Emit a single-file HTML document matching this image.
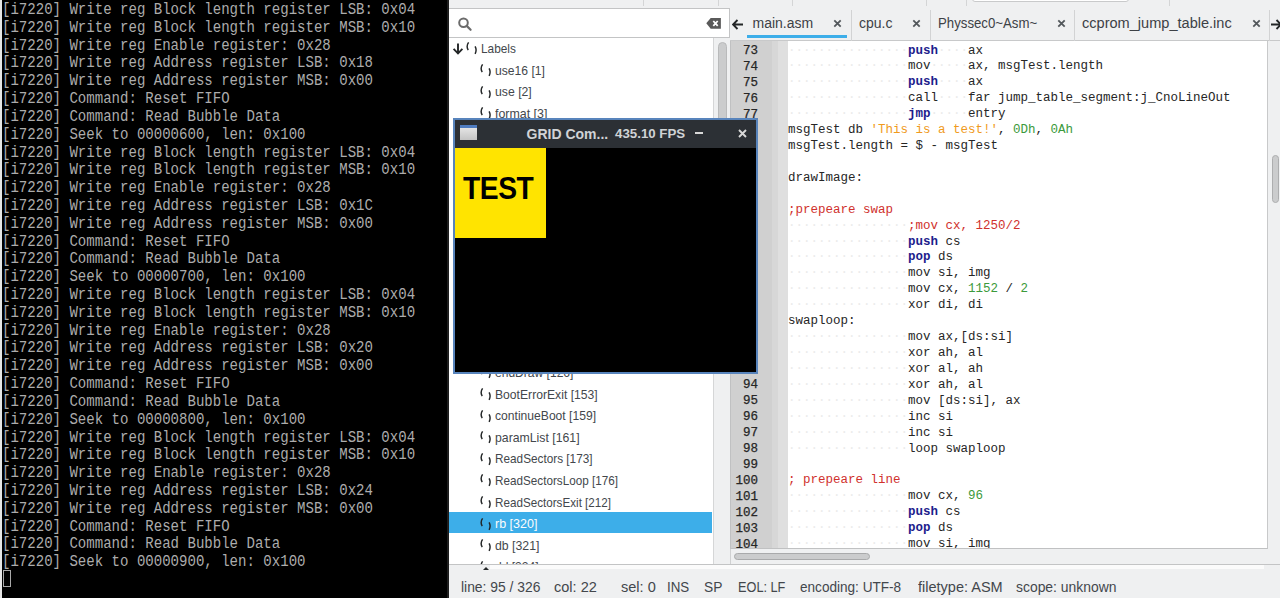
<!DOCTYPE html><html><head><meta charset="utf-8"><style>html,body{margin:0;padding:0}
body{width:1280px;height:598px;overflow:hidden;position:relative;background:#eff0f1;font-family:"Liberation Sans",sans-serif}
div,span,pre,svg{position:absolute;box-sizing:border-box}
pre{margin:0}
pre span{position:static}
#term{left:0;top:0;width:449px;height:598px;background:#000}
#termstrip{left:0;top:0;width:2px;height:598px;background:#e6e6e6}
#termedge{left:447px;top:0;width:2px;height:598px;background:#1e1e1e}
#termtext{left:1.5px;top:2px;font-family:"Liberation Mono",monospace;font-size:16px;line-height:17.82px;color:#acacac;transform:scaleX(0.878);transform-origin:0 0}
#cursor{left:2.5px;top:569.5px;width:8.5px;height:17.5px;border:1px solid #a8a8a8}
#toolbar{left:449px;top:0;width:831px;height:8px;background:#eff0f1}
.tsep{top:0;width:1px;height:6px;background:#d4d5d6}
#tbox{left:523px;top:-4px;width:157px;height:6px;background:#fff;border:1px solid #c9cacb;border-radius:3px}
#search{left:449px;top:8px;width:281px;height:30px;background:#fff;border:1px solid #c3c4c5;border-left:none}
#list{left:449px;top:38px;width:264px;height:526px;background:#fff;overflow:hidden}
.row{left:0;width:263px;height:21.6px;color:#43474c;font-size:12.2px}
.row.sel{background:#3daee9;color:#fcfcfc;height:21px;top:475px}
.arr{left:3px;top:6px}
.ico{top:5.2px}
.lbl{top:4.8px;white-space:pre;transform:scaleX(0.97);transform-origin:0 0}
#ltrack{left:713px;top:38px;width:17px;height:526px;background:#eff0f1;border-left:1px solid #d5d6d7}
#lthumb{left:4px;top:4px;width:9px;height:300px;background:#cbcccd;border:1px solid #b9babb;border-radius:5px}
#tabbar{left:730px;top:8px;width:550px;height:33px;background:#eff0f1;border-bottom:1px solid #c8c9ca}
.tab{top:7px;font-size:14px;color:#3d4146;white-space:pre}
.tclose{top:10.8px}
.tabsep{top:2px;width:1px;height:31px;background:#d2d3d4}
#tabul{left:16.5px;top:27px;width:100px;height:3px;background:#3daee9}
#editor{left:730px;top:41px;width:538px;height:508px;background:#fff;border-left:1px solid #c0c1c2;border-bottom:1px solid #c0c1c2;border-right:1px solid #c8c9ca;overflow:hidden}
#gut1{left:0;top:0;width:41px;height:508px;background:#d0d0d0}
#gut2{left:41px;top:0;width:6px;height:508px;background:#d7d7d7}
#gut3{left:47px;top:0;width:10px;height:508px;background:#dfdfdf}
#lnum{left:0;top:3px;width:27px;text-align:right;font-family:"Liberation Mono",monospace;font-size:12.5px;line-height:15.92px;color:#262626;-webkit-text-stroke:0.25px #262626}
#code{left:57px;top:2.5px;font-family:"Liberation Mono",monospace;font-size:12.5px;line-height:15.92px;color:#262626}
.ws{color:#ebebeb}
.k{color:#1c1c8c;font-weight:bold}
.c{color:#d0312d}
.s{color:#f09a1c}
.n{color:#3c9a3c}
#vtrack{left:1268px;top:41px;width:12px;height:508px;background:#eff0f1}
#vthumb{left:4px;top:113.5px;width:7px;height:48.5px;background:#cbcccd;border:1px solid #adaeaf;border-radius:4px}
#htrack{left:730px;top:549px;width:550px;height:15px;background:#eff0f1;border-left:1px solid #d0d1d2}
#hthumb{left:3px;top:4px;width:136px;height:7px;background:#cbcccd;border:1px solid #a9aaab;border-radius:4px}
#status{left:449px;top:564px;width:831px;height:34px;background:#eff0f1;border-top:1px solid #c3c4c5}
#swhite{left:41px;top:0;width:774px;height:4px;background:#fbfbfb}
#stri{left:34px;top:2px;width:0;height:0;border-left:3px solid transparent;border-right:3px solid transparent;border-bottom:3px solid #232627}
.st{top:14.2px;font-size:13.9px;color:#43474c;white-space:pre;transform:scaleX(0.965);transform-origin:0 0}
#win{left:453px;top:118px;width:305px;height:256px;background:#000;border:2px solid #5884bc}
#wtitle{left:0;top:0;width:301px;height:28px;background:#2c3035}
#wicon{left:4.8px;top:4.8px;width:17px;height:15.5px;background:linear-gradient(#e4e4e4,#c4c4c4);border-top:3.5px solid #4f7cc0}
#wt1{left:71.5px;top:5.8px;font-weight:bold;font-size:14px;color:#d0d3d6;white-space:pre}
#wt2{left:160px;top:6.2px;font-weight:bold;font-size:13.3px;color:#d0d3d6;white-space:pre}
#wmin{left:240px;top:12px;width:8px;height:2px;background:#d8d8d8}
#wclose{left:282.5px;top:8.5px}
#wbody{left:0;top:28px;width:301px;height:224px;background:#000}
#yel{left:0;top:0;width:91px;height:90px;background:#ffe400}
#test{left:8px;top:22px;font-weight:bold;font-size:32px;color:#000;transform:scaleX(0.882);transform-origin:0 0;letter-spacing:-0.5px}
</style></head><body><div id="term"><div id="termstrip"></div><div id="termedge"></div><pre id="termtext">[i7220] Write reg Block length register LSB: 0x04
[i7220] Write reg Block length register MSB: 0x10
[i7220] Write reg Enable register: 0x28
[i7220] Write reg Address register LSB: 0x18
[i7220] Write reg Address register MSB: 0x00
[i7220] Command: Reset FIFO
[i7220] Command: Read Bubble Data
[i7220] Seek to 00000600, len: 0x100
[i7220] Write reg Block length register LSB: 0x04
[i7220] Write reg Block length register MSB: 0x10
[i7220] Write reg Enable register: 0x28
[i7220] Write reg Address register LSB: 0x1C
[i7220] Write reg Address register MSB: 0x00
[i7220] Command: Reset FIFO
[i7220] Command: Read Bubble Data
[i7220] Seek to 00000700, len: 0x100
[i7220] Write reg Block length register LSB: 0x04
[i7220] Write reg Block length register MSB: 0x10
[i7220] Write reg Enable register: 0x28
[i7220] Write reg Address register LSB: 0x20
[i7220] Write reg Address register MSB: 0x00
[i7220] Command: Reset FIFO
[i7220] Command: Read Bubble Data
[i7220] Seek to 00000800, len: 0x100
[i7220] Write reg Block length register LSB: 0x04
[i7220] Write reg Block length register MSB: 0x10
[i7220] Write reg Enable register: 0x28
[i7220] Write reg Address register LSB: 0x24
[i7220] Write reg Address register MSB: 0x00
[i7220] Command: Reset FIFO
[i7220] Command: Read Bubble Data
[i7220] Seek to 00000900, len: 0x100</pre><div id="cursor"></div></div><div id="toolbar"><div class="tsep" style="left:194px"></div><div class="tsep" style="left:269px"></div><div class="tsep" style="left:343px"></div><div class="tsep" style="left:477px"></div><div class="tsep" style="left:517px"></div><div class="tsep" style="left:720px"></div><div id="tbox"></div></div><div id="search"><svg width="20" height="20" style="position:absolute;left:8px;top:3px" viewBox="0 0 20 20"><circle cx="6.5" cy="10.7" r="4.3" fill="none" stroke="#6b6b6b" stroke-width="2"/><line x1="9.7" y1="13.9" x2="13.6" y2="17.8" stroke="#6b6b6b" stroke-width="2.2" stroke-linecap="round"/></svg><svg width="18" height="14" style="position:absolute;left:256px;top:9px" viewBox="0 0 18 14"><path d="M1.3 5.3 L5.7 0.1 L15.9 0.1 L15.9 10.7 L5.7 10.7 Z" fill="#5a5a5a"/><path d="M8.3 3 L12.7 7.8 M12.7 3 L8.3 7.8" stroke="#fff" stroke-width="1.8"/></svg></div><div id="list"><div class="row" style="top:-0.8px"><svg class="arr" width="12" height="12" viewBox="0 0 12 12"><path d="M6 0.5 V10.3 M1.6 5.9 L6 10.3 L10.4 5.9" fill="none" stroke="#232627" stroke-width="1.9"/></svg><svg class="ico" style="left:17.3px" width="14" height="14" viewBox="0 0 14 14"><path d="M2.6 0.4 Q-0.1 4.2 2.2 8.1" fill="none" stroke="#232627" stroke-width="1.45"/><path d="M9.1 4.3 Q11.1 7.9 9.1 11.8" fill="none" stroke="#232627" stroke-width="1.45"/></svg><span class="lbl" style="left:32px;transform:scaleX(0.970)">Labels</span></div><div class="row" style="top:20.8px"><svg class="ico" style="left:31.3px" width="14" height="14" viewBox="0 0 14 14"><path d="M2.6 0.4 Q-0.1 4.2 2.2 8.1" fill="none" stroke="#232627" stroke-width="1.45"/><path d="M9.1 4.3 Q11.1 7.9 9.1 11.8" fill="none" stroke="#232627" stroke-width="1.45"/></svg><span class="lbl" style="left:46px;transform:scaleX(0.995)">use16 [1]</span></div><div class="row" style="top:42.4px"><svg class="ico" style="left:31.3px" width="14" height="14" viewBox="0 0 14 14"><path d="M2.6 0.4 Q-0.1 4.2 2.2 8.1" fill="none" stroke="#232627" stroke-width="1.45"/><path d="M9.1 4.3 Q11.1 7.9 9.1 11.8" fill="none" stroke="#232627" stroke-width="1.45"/></svg><span class="lbl" style="left:46px;transform:scaleX(1.005)">use [2]</span></div><div class="row" style="top:64.0px"><svg class="ico" style="left:31.3px" width="14" height="14" viewBox="0 0 14 14"><path d="M2.6 0.4 Q-0.1 4.2 2.2 8.1" fill="none" stroke="#232627" stroke-width="1.45"/><path d="M9.1 4.3 Q11.1 7.9 9.1 11.8" fill="none" stroke="#232627" stroke-width="1.45"/></svg><span class="lbl" style="left:46px;transform:scaleX(1.018)">format [3]</span></div><div class="row" style="top:85.6px"><svg class="ico" style="left:31.3px" width="14" height="14" viewBox="0 0 14 14"><path d="M2.6 0.4 Q-0.1 4.2 2.2 8.1" fill="none" stroke="#232627" stroke-width="1.45"/><path d="M9.1 4.3 Q11.1 7.9 9.1 11.8" fill="none" stroke="#232627" stroke-width="1.45"/></svg><span class="lbl" style="left:46px;transform:scaleX(0.989)">a [4]</span></div><div class="row" style="top:107.2px"><svg class="ico" style="left:31.3px" width="14" height="14" viewBox="0 0 14 14"><path d="M2.6 0.4 Q-0.1 4.2 2.2 8.1" fill="none" stroke="#232627" stroke-width="1.45"/><path d="M9.1 4.3 Q11.1 7.9 9.1 11.8" fill="none" stroke="#232627" stroke-width="1.45"/></svg><span class="lbl" style="left:46px;transform:scaleX(0.989)">b [5]</span></div><div class="row" style="top:128.8px"><svg class="ico" style="left:31.3px" width="14" height="14" viewBox="0 0 14 14"><path d="M2.6 0.4 Q-0.1 4.2 2.2 8.1" fill="none" stroke="#232627" stroke-width="1.45"/><path d="M9.1 4.3 Q11.1 7.9 9.1 11.8" fill="none" stroke="#232627" stroke-width="1.45"/></svg><span class="lbl" style="left:46px;transform:scaleX(0.989)">c [6]</span></div><div class="row" style="top:150.4px"><svg class="ico" style="left:31.3px" width="14" height="14" viewBox="0 0 14 14"><path d="M2.6 0.4 Q-0.1 4.2 2.2 8.1" fill="none" stroke="#232627" stroke-width="1.45"/><path d="M9.1 4.3 Q11.1 7.9 9.1 11.8" fill="none" stroke="#232627" stroke-width="1.45"/></svg><span class="lbl" style="left:46px;transform:scaleX(0.989)">d [7]</span></div><div class="row" style="top:172.0px"><svg class="ico" style="left:31.3px" width="14" height="14" viewBox="0 0 14 14"><path d="M2.6 0.4 Q-0.1 4.2 2.2 8.1" fill="none" stroke="#232627" stroke-width="1.45"/><path d="M9.1 4.3 Q11.1 7.9 9.1 11.8" fill="none" stroke="#232627" stroke-width="1.45"/></svg><span class="lbl" style="left:46px;transform:scaleX(0.989)">e [8]</span></div><div class="row" style="top:193.6px"><svg class="ico" style="left:31.3px" width="14" height="14" viewBox="0 0 14 14"><path d="M2.6 0.4 Q-0.1 4.2 2.2 8.1" fill="none" stroke="#232627" stroke-width="1.45"/><path d="M9.1 4.3 Q11.1 7.9 9.1 11.8" fill="none" stroke="#232627" stroke-width="1.45"/></svg><span class="lbl" style="left:46px;transform:scaleX(0.989)">f [9]</span></div><div class="row" style="top:215.2px"><svg class="ico" style="left:31.3px" width="14" height="14" viewBox="0 0 14 14"><path d="M2.6 0.4 Q-0.1 4.2 2.2 8.1" fill="none" stroke="#232627" stroke-width="1.45"/><path d="M9.1 4.3 Q11.1 7.9 9.1 11.8" fill="none" stroke="#232627" stroke-width="1.45"/></svg><span class="lbl" style="left:46px;transform:scaleX(0.989)">g [10]</span></div><div class="row" style="top:236.8px"><svg class="ico" style="left:31.3px" width="14" height="14" viewBox="0 0 14 14"><path d="M2.6 0.4 Q-0.1 4.2 2.2 8.1" fill="none" stroke="#232627" stroke-width="1.45"/><path d="M9.1 4.3 Q11.1 7.9 9.1 11.8" fill="none" stroke="#232627" stroke-width="1.45"/></svg><span class="lbl" style="left:46px;transform:scaleX(0.989)">h [11]</span></div><div class="row" style="top:258.4px"><svg class="ico" style="left:31.3px" width="14" height="14" viewBox="0 0 14 14"><path d="M2.6 0.4 Q-0.1 4.2 2.2 8.1" fill="none" stroke="#232627" stroke-width="1.45"/><path d="M9.1 4.3 Q11.1 7.9 9.1 11.8" fill="none" stroke="#232627" stroke-width="1.45"/></svg><span class="lbl" style="left:46px;transform:scaleX(0.989)">i [12]</span></div><div class="row" style="top:280.0px"><svg class="ico" style="left:31.3px" width="14" height="14" viewBox="0 0 14 14"><path d="M2.6 0.4 Q-0.1 4.2 2.2 8.1" fill="none" stroke="#232627" stroke-width="1.45"/><path d="M9.1 4.3 Q11.1 7.9 9.1 11.8" fill="none" stroke="#232627" stroke-width="1.45"/></svg><span class="lbl" style="left:46px;transform:scaleX(0.989)">j [13]</span></div><div class="row" style="top:301.6px"><svg class="ico" style="left:31.3px" width="14" height="14" viewBox="0 0 14 14"><path d="M2.6 0.4 Q-0.1 4.2 2.2 8.1" fill="none" stroke="#232627" stroke-width="1.45"/><path d="M9.1 4.3 Q11.1 7.9 9.1 11.8" fill="none" stroke="#232627" stroke-width="1.45"/></svg><span class="lbl" style="left:46px;transform:scaleX(0.989)">k [14]</span></div><div class="row" style="top:323.2px"><svg class="ico" style="left:31.3px" width="14" height="14" viewBox="0 0 14 14"><path d="M2.6 0.4 Q-0.1 4.2 2.2 8.1" fill="none" stroke="#232627" stroke-width="1.45"/><path d="M9.1 4.3 Q11.1 7.9 9.1 11.8" fill="none" stroke="#232627" stroke-width="1.45"/></svg><span class="lbl" style="left:46px;transform:scaleX(0.989)">endDraw [126]</span></div><div class="row" style="top:344.8px"><svg class="ico" style="left:31.3px" width="14" height="14" viewBox="0 0 14 14"><path d="M2.6 0.4 Q-0.1 4.2 2.2 8.1" fill="none" stroke="#232627" stroke-width="1.45"/><path d="M9.1 4.3 Q11.1 7.9 9.1 11.8" fill="none" stroke="#232627" stroke-width="1.45"/></svg><span class="lbl" style="left:46px;transform:scaleX(0.997)">BootErrorExit [153]</span></div><div class="row" style="top:366.4px"><svg class="ico" style="left:31.3px" width="14" height="14" viewBox="0 0 14 14"><path d="M2.6 0.4 Q-0.1 4.2 2.2 8.1" fill="none" stroke="#232627" stroke-width="1.45"/><path d="M9.1 4.3 Q11.1 7.9 9.1 11.8" fill="none" stroke="#232627" stroke-width="1.45"/></svg><span class="lbl" style="left:46px;transform:scaleX(0.994)">continueBoot [159]</span></div><div class="row" style="top:388.0px"><svg class="ico" style="left:31.3px" width="14" height="14" viewBox="0 0 14 14"><path d="M2.6 0.4 Q-0.1 4.2 2.2 8.1" fill="none" stroke="#232627" stroke-width="1.45"/><path d="M9.1 4.3 Q11.1 7.9 9.1 11.8" fill="none" stroke="#232627" stroke-width="1.45"/></svg><span class="lbl" style="left:46px;transform:scaleX(1.007)">paramList [161]</span></div><div class="row" style="top:409.6px"><svg class="ico" style="left:31.3px" width="14" height="14" viewBox="0 0 14 14"><path d="M2.6 0.4 Q-0.1 4.2 2.2 8.1" fill="none" stroke="#232627" stroke-width="1.45"/><path d="M9.1 4.3 Q11.1 7.9 9.1 11.8" fill="none" stroke="#232627" stroke-width="1.45"/></svg><span class="lbl" style="left:46px;transform:scaleX(0.966)">ReadSectors [173]</span></div><div class="row" style="top:431.2px"><svg class="ico" style="left:31.3px" width="14" height="14" viewBox="0 0 14 14"><path d="M2.6 0.4 Q-0.1 4.2 2.2 8.1" fill="none" stroke="#232627" stroke-width="1.45"/><path d="M9.1 4.3 Q11.1 7.9 9.1 11.8" fill="none" stroke="#232627" stroke-width="1.45"/></svg><span class="lbl" style="left:46px;transform:scaleX(0.960)">ReadSectorsLoop [176]</span></div><div class="row" style="top:452.8px"><svg class="ico" style="left:31.3px" width="14" height="14" viewBox="0 0 14 14"><path d="M2.6 0.4 Q-0.1 4.2 2.2 8.1" fill="none" stroke="#232627" stroke-width="1.45"/><path d="M9.1 4.3 Q11.1 7.9 9.1 11.8" fill="none" stroke="#232627" stroke-width="1.45"/></svg><span class="lbl" style="left:46px;transform:scaleX(0.957)">ReadSectorsExit [212]</span></div><div class="row sel" style="top:474.4px"><svg class="ico" style="left:31.3px" width="14" height="14" viewBox="0 0 14 14"><path d="M2.6 0.4 Q-0.1 4.2 2.2 8.1" fill="none" stroke="#232627" stroke-width="1.45"/><path d="M9.1 4.3 Q11.1 7.9 9.1 11.8" fill="none" stroke="#232627" stroke-width="1.45"/></svg><span class="lbl" style="left:46px;transform:scaleX(1.028)">rb [320]</span></div><div class="row" style="top:496.0px"><svg class="ico" style="left:31.3px" width="14" height="14" viewBox="0 0 14 14"><path d="M2.6 0.4 Q-0.1 4.2 2.2 8.1" fill="none" stroke="#232627" stroke-width="1.45"/><path d="M9.1 4.3 Q11.1 7.9 9.1 11.8" fill="none" stroke="#232627" stroke-width="1.45"/></svg><span class="lbl" style="left:46px;transform:scaleX(1.009)">db [321]</span></div><div class="row" style="top:517.6px"><svg class="ico" style="left:31.3px" width="14" height="14" viewBox="0 0 14 14"><path d="M2.6 0.4 Q-0.1 4.2 2.2 8.1" fill="none" stroke="#232627" stroke-width="1.45"/><path d="M9.1 4.3 Q11.1 7.9 9.1 11.8" fill="none" stroke="#232627" stroke-width="1.45"/></svg><span class="lbl" style="left:46px;transform:scaleX(0.989)">dd [324]</span></div></div><div id="ltrack"><div id="lthumb"></div></div><div id="tabbar"><svg width="12" height="12" style="position:absolute;left:2px;top:11px" viewBox="0 0 12 12"><path d="M11 5.5 H1.5 M5.5 1 L1 5.5 L5.5 10" fill="none" stroke="#232627" stroke-width="1.9"/></svg><span class="tab" style="left:22.5px;transform:scaleX(1.000);transform-origin:0 0">main.asm</span><svg class="tclose" width="9" height="9" style="left:103.0px" viewBox="0 0 9 9"><path d="M1.3 1.3 L7.7 7.7 M7.7 1.3 L1.3 7.7" stroke="#52575b" stroke-width="1.8"/></svg><div class="tabsep" style="left:120.5px"></div><span class="tab" style="left:129.0px;transform:scaleX(1.000);transform-origin:0 0">cpu.c</span><svg class="tclose" width="9" height="9" style="left:182.0px" viewBox="0 0 9 9"><path d="M1.3 1.3 L7.7 7.7 M7.7 1.3 L1.3 7.7" stroke="#52575b" stroke-width="1.8"/></svg><div class="tabsep" style="left:199.5px"></div><span class="tab" style="left:208.2px;transform:scaleX(0.944);transform-origin:0 0">Physsec0~Asm~</span><svg class="tclose" width="9" height="9" style="left:327.0px" viewBox="0 0 9 9"><path d="M1.3 1.3 L7.7 7.7 M7.7 1.3 L1.3 7.7" stroke="#52575b" stroke-width="1.8"/></svg><div class="tabsep" style="left:344.0px"></div><span class="tab" style="left:352.2px;transform:scaleX(1.040);transform-origin:0 0">ccprom_jump_table.inc</span><svg class="tclose" width="9" height="9" style="left:522.0px" viewBox="0 0 9 9"><path d="M1.3 1.3 L7.7 7.7 M7.7 1.3 L1.3 7.7" stroke="#52575b" stroke-width="1.8"/></svg><div class="tabsep" style="left:539.0px"></div><div id="tabul"></div><svg width="12" height="12" style="position:absolute;left:540px;top:11px" viewBox="0 0 12 12"><path d="M1 5.5 H10.5 M6.5 1 L11 5.5 L6.5 10" fill="none" stroke="#232627" stroke-width="1.9"/></svg></div><div id="editor"><div id="gut1"></div><div id="gut2"></div><div id="gut3"></div><pre id="lnum">73
74
75
76
77
78
79
80
81
82
83
84
85
86
87
88
89
90
91
92
93
94
95
96
97
98
99
100
101
102
103
104</pre><pre id="code"><span class="ws">················</span><span class="k">push</span><span class="ws">····</span>ax
<span class="ws">················</span>mov<span class="ws">·····</span>ax, msgTest.length
<span class="ws">················</span><span class="k">push</span><span class="ws">····</span>ax
<span class="ws">················</span>call<span class="ws">····</span>far jump_table_segment:j_CnoLineOut
<span class="ws">················</span><span class="k">jmp</span><span class="ws">·····</span>entry
msgTest db <span class="s">&#x27;This is a test!&#x27;</span>, <span class="n">0Dh</span>, <span class="n">0Ah</span>
msgTest.length = $ - msgTest

drawImage:

<span class="c">;prepeare swap</span>
<span class="ws">················</span><span class="c">;mov cx, 1250/2</span>
<span class="ws">················</span><span class="k">push</span> cs
<span class="ws">················</span><span class="k">pop</span> ds
<span class="ws">················</span>mov si, img
<span class="ws">················</span>mov cx, <span class="n">1152</span> / <span class="n">2</span>
<span class="ws">················</span>xor di, di
swaploop:
<span class="ws">················</span>mov ax,[ds:si]
<span class="ws">················</span>xor ah, al
<span class="ws">················</span>xor al, ah
<span class="ws">················</span>xor ah, al
<span class="ws">················</span>mov [ds:si], ax
<span class="ws">················</span>inc si
<span class="ws">················</span>inc si
<span class="ws">················</span>loop swaploop

<span class="c">; prepeare line</span>
<span class="ws">················</span>mov cx, <span class="n">96</span>
<span class="ws">················</span><span class="k">push</span> cs
<span class="ws">················</span><span class="k">pop</span> ds
<span class="ws">················</span>mov si, img</pre></div><div id="vtrack"><div id="vthumb"></div></div><div id="htrack"><div id="hthumb"></div></div><div id="status"><div id="swhite"></div><div id="stri"></div><span class="st" style="left:11.9px;transform:scaleX(0.998)">line: 95 / 326</span><span class="st" style="left:105.1px;transform:scaleX(1.046)">col: 22</span><span class="st" style="left:172.2px;transform:scaleX(1.048)">sel: 0</span><span class="st" style="left:217.5px;transform:scaleX(0.960)">INS</span><span class="st" style="left:254.5px;transform:scaleX(0.991)">SP</span><span class="st" style="left:288.8px;transform:scaleX(0.916)">EOL: LF</span><span class="st" style="left:350.7px;transform:scaleX(0.977)">encoding: UTF-8</span><span class="st" style="left:468.5px;transform:scaleX(1.045)">filetype: ASM</span><span class="st" style="left:567.3px;transform:scaleX(1.001)">scope: unknown</span></div><div id="win"><div id="wtitle"><div id="wicon"></div><span id="wt1">GRID Com...</span><span id="wt2">435.10 FPS</span><div id="wmin"></div><svg id="wclose" width="9" height="9" viewBox="0 0 9 9"><path d="M1 1 L8 8 M8 1 L1 8" stroke="#d8d8d8" stroke-width="1.9"/></svg></div><div id="wbody"><div id="yel"><span id="test">TEST</span></div></div></div></body></html>
